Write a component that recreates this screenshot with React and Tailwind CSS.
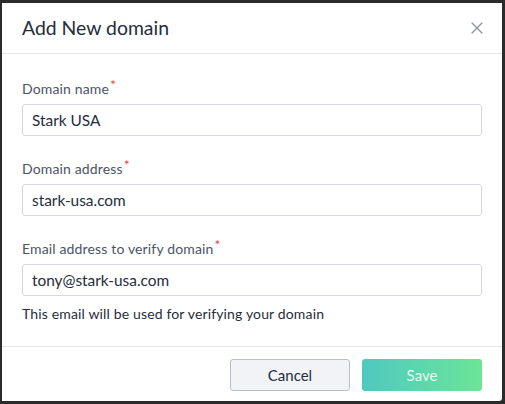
import React from "react";

function Field({ label, value, helper }) {
  return (
    <div className="flex flex-col">
      <label className="text-[14px] leading-[20px] tracking-[0.15px] text-[#4a5468] pt-[1px]">
        {label}
        <span className="text-[#e5484d] relative -top-[4px] ml-[1px]">*</span>
      </label>
      <input
        readOnly
        value={value}
        className="mt-[5px] h-[32px] w-full rounded-[3px] border border-[#d5d8df] bg-white px-[9px] text-[15.4px] text-[#262d3d] outline-none"
        style={{ fontFamily: "Lato, 'Open Sans', sans-serif" }}
      />
      {helper && (
        <p className="mt-[8px] text-[14px] leading-[20px] tracking-[0.15px] text-[#262d3d]">{helper}</p>
      )}
    </div>
  );
}

export default function App() {
  return (
    <div
      className="w-[505px] h-[404px] bg-[#2b2b2b] pt-[3px] pl-[2px] pr-[3px] pb-[3px]"
      style={{ fontFamily: "Lato, 'Open Sans', sans-serif" }}
    >
      <div className="h-full w-full bg-white flex flex-col rounded-br-[3px]">
        <div className="h-[51px] border-b border-[#e3e5ea] flex items-center justify-between px-[20px]">
          <h1 className="text-[19.4px] text-[#262d3d]">Add New domain</h1>
          <svg width="12" height="12" viewBox="0 0 12 12" className="mr-[-1px]">
            <path d="M1 1L11 11M11 1L1 11" stroke="#8a91a3" strokeWidth="1.3" strokeLinecap="round" />
          </svg>
        </div>
        <div className="flex-1 px-[20px] pt-[24px] flex flex-col gap-[22px]">
          <Field label="Domain name" value="Stark USA" />
          <Field label="Domain address" value="stark-usa.com" />
          <Field
            label="Email address to verify domain"
            value="tony@stark-usa.com"
            helper="This email will be used for verifying your domain"
          />
        </div>
        <div className="border-t border-[#e3e5ea] flex justify-end gap-[12px] px-[20px] pt-[12px] pb-[10px]">
          <button className="h-[32px] w-[120px] rounded-[3px] border border-[#b9bdca] bg-[#f2f3f7] text-[15px] text-[#262d3d]">
            Cancel
          </button>
          <button className="h-[32px] w-[120px] rounded-[3px] bg-gradient-to-r from-[#4ec9bf] to-[#6be596] text-[15px] text-[#e6fbf2]">
            Save
          </button>
        </div>
      </div>
    </div>
  );
}
